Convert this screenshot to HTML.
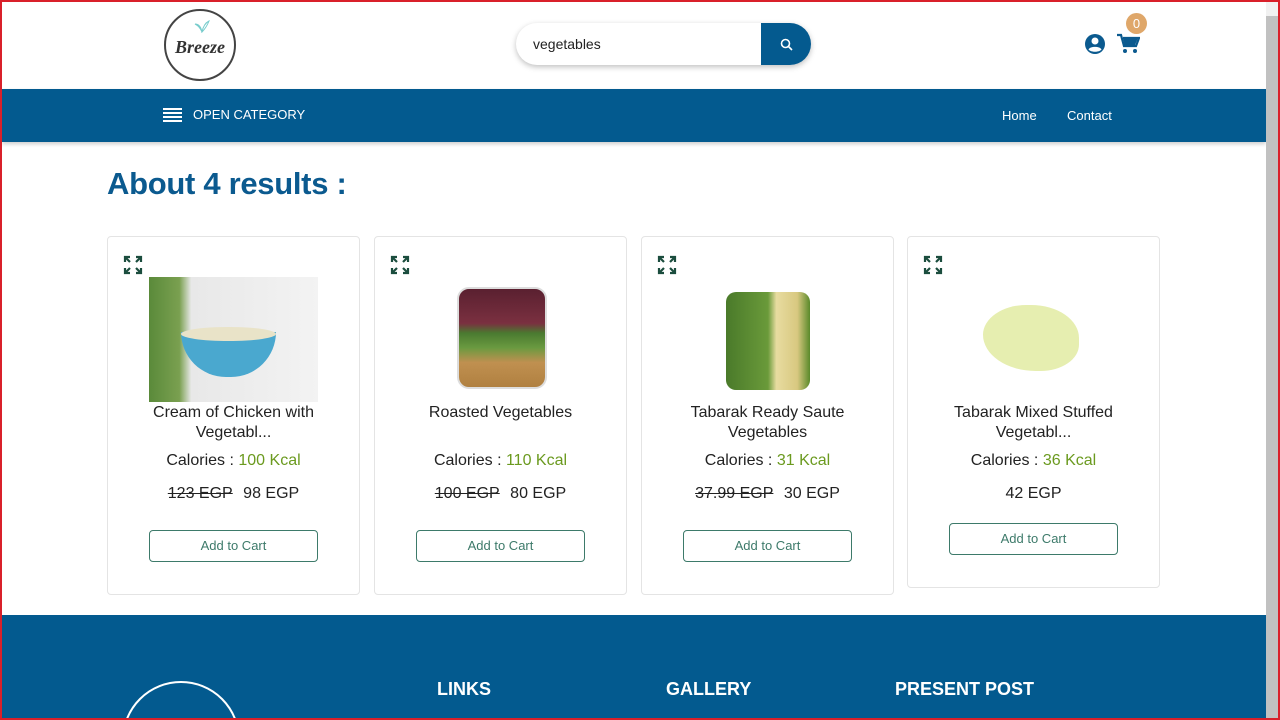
<!DOCTYPE html>
<html><head><meta charset="utf-8"><style>
*{box-sizing:border-box;margin:0;padding:0}
html,body{width:1280px;height:720px;overflow:hidden}
body{font-family:"Liberation Sans",sans-serif;background:#fff;position:relative}
.frame{position:absolute;inset:0;border:2px solid #d9202a;border-right:none;pointer-events:none;z-index:10}
.rb{position:absolute;right:0;top:0;width:2px;height:720px;background:#d9202a;z-index:11}
.sb{position:absolute;right:2px;top:2px;width:12px;height:716px;background:#c1c1c1;z-index:9}
.sbt{position:absolute;right:2px;top:2px;width:12px;height:14px;background:#f1f1f1;z-index:9}
.logo{position:absolute;left:164px;top:9px;width:72px;height:72px;border:2px solid #444;border-radius:50%;text-align:center}
.logo span{position:absolute;top:26px;left:0;right:0;font:italic bold 18px "Liberation Serif",serif;color:#333}
.search{position:absolute;left:516px;top:23px;width:295px;height:42px;border-radius:21px;box-shadow:0 2px 6px rgba(0,0,0,.25);background:#fff}
.search span{position:absolute;left:17px;top:13px;font-size:14px;color:#222}
.sbtn{position:absolute;right:0;top:0;width:50px;height:42px;background:#045a8f;border-radius:0 21px 21px 0}
.nav{position:absolute;left:2px;top:89px;width:1264px;height:53px;background:#035a8f;box-shadow:0 2px 4px rgba(0,0,0,.2)}
.nav .cat{position:absolute;left:191px;top:18px;color:#fff;font-size:13px}
.nav .hm{position:absolute;top:19px;color:#fff;font-size:13px}
h1{position:absolute;left:107px;top:166px;font-size:31px;color:#0b5a8f;font-weight:bold;letter-spacing:-0.3px}
.card{position:absolute;top:236px;width:253px;height:359px;border:1px solid #e4e4e4;border-radius:4px;text-align:center;color:#222}
.card .ex{position:absolute;left:15px;top:18px}
.card .img{position:absolute;left:41px;top:40px;width:169px;height:125px}
.card .t{position:absolute;left:0;right:0;top:166px;font-size:16px;line-height:20px}
.card .c{position:absolute;left:0;right:0;top:215px;font-size:16px}
.card .c b{font-weight:normal;color:#6b9a1f}
.card .p{position:absolute;left:0;right:0;top:248px;font-size:16px}
.card .p s{margin-right:6px}
.card .btn{position:absolute;left:41px;top:293px;width:169px;height:32px;border:1px solid #3d7a6a;border-radius:4px;color:#3d7a6a;font-size:13px;line-height:30px}
.foot{position:absolute;left:2px;top:615px;width:1264px;height:105px;background:#035a8f;overflow:hidden}
.foot h3{position:absolute;top:64px;color:#fff;font-size:18px}
</style></head><body>
<div class="logo"><span>Breeze</span><svg style="position:absolute;left:28px;top:8px" width="16" height="14"><path d="M8 13C6 8 3 6 1 5 5 5 7 8 8 13ZM8 13C9 8 11 4 15 2 13 7 11 10 8 13Z" fill="none" stroke="#7cc" stroke-width="1"/></svg></div>
<div class="search"><span>vegetables</span><div class="sbtn"><svg style="position:absolute;left:19px;top:15px" width="13" height="13"><circle cx="5.5" cy="5.5" r="4" stroke="#fff" stroke-width="1.6" fill="none"/><path d="M8.5 8.5L12 12" stroke="#fff" stroke-width="1.6"/></svg></div></div>
<svg style="position:absolute;left:1084px;top:33px" width="22" height="22" viewBox="0 0 22 22"><circle cx="11" cy="11" r="10" fill="#0b5a8f"/><circle cx="11" cy="8" r="3.5" fill="#fff"/><path d="M4.5 16.5C6 13 16 13 17.5 16.5 15 19.5 7 19.5 4.5 16.5Z" fill="#fff"/></svg>
<svg style="position:absolute;left:1116px;top:33px" width="24" height="22" viewBox="0 0 24 22"><path d="M1 2h4l3 11h12l3-8H7" fill="none" stroke="#0b5a8f" stroke-width="2.2"/><path d="M7 5h15l-3 7H8.5z" fill="#0b5a8f"/><circle cx="9" cy="18" r="2" fill="#0b5a8f"/><circle cx="19" cy="18" r="2" fill="#0b5a8f"/></svg>
<div style="position:absolute;left:1126px;top:13px;width:21px;height:21px;border-radius:50%;background:#dfa76a;color:#fff;font-size:13px;text-align:center;line-height:21px">0</div>
<div class="nav"><svg style="position:absolute;left:161px;top:18px" width="19" height="16"><path d="M0 2h19M0 6h19M0 10h19M0 14h19" stroke="#fff" stroke-width="2"/></svg><span class="cat">OPEN CATEGORY</span><span class="hm" style="left:1000px">Home</span><span class="hm" style="left:1065px">Contact</span></div>
<h1>About 4 results :</h1>

<div class="card" style="left:107px"><svg class="ex" width="20" height="20" viewBox="0 0 20 20" fill="none" stroke="#1b4d3e" stroke-width="2.2"><path d="M2 7V2h5M2 2l5 5M18 7V2h-5M18 2l-5 5M2 13v5h5M2 18l5-5M18 13v5h-5M18 18l-5-5"/></svg>
<div class="img" style="background:linear-gradient(90deg,#5a8a3a 0,#7aa050 18%,#e8e8e8 25%,#f3f3f3 100%)"><div style="position:absolute;left:32px;top:55px;width:95px;height:45px;border-radius:0 0 48px 48px;background:#4aa8cf"></div><div style="position:absolute;left:32px;top:50px;width:95px;height:14px;border-radius:50%;background:#e9e3c8"></div></div>
<div class="t">Cream of Chicken with<br>Vegetabl...</div><div class="c">Calories : <b>100 Kcal</b></div><div class="p"><s>123 EGP</s> 98 EGP</div><div class="btn">Add to Cart</div></div>

<div class="card" style="left:374px"><svg class="ex" width="20" height="20" viewBox="0 0 20 20" fill="none" stroke="#1b4d3e" stroke-width="2.2"><path d="M2 7V2h5M2 2l5 5M18 7V2h-5M18 2l-5 5M2 13v5h5M2 18l5-5M18 13v5h-5M18 18l-5-5"/></svg>
<div style="position:absolute;left:82px;top:50px;width:90px;height:102px;border-radius:12px;border:2px solid #ddd;background:linear-gradient(#5a2030 0,#7a3040 35%,#4a7a30 45%,#6a9a40 60%,#c09050 75%,#b08040 100%)"></div>
<div class="t">Roasted Vegetables</div><div class="c">Calories : <b>110 Kcal</b></div><div class="p"><s>100 EGP</s> 80 EGP</div><div class="btn">Add to Cart</div></div>

<div class="card" style="left:641px"><svg class="ex" width="20" height="20" viewBox="0 0 20 20" fill="none" stroke="#1b4d3e" stroke-width="2.2"><path d="M2 7V2h5M2 2l5 5M18 7V2h-5M18 2l-5 5M2 13v5h5M2 18l5-5M18 13v5h-5M18 18l-5-5"/></svg>
<div style="position:absolute;left:84px;top:55px;width:84px;height:98px;border-radius:10px;background:linear-gradient(90deg,#4a7a2a,#6a9a3a 50%,#e8dca0 60%,#d8c880 85%,#5a8a2a)"></div>
<div class="t">Tabarak Ready Saute<br>Vegetables</div><div class="c">Calories : <b>31 Kcal</b></div><div class="p"><s>37.99 EGP</s> 30 EGP</div><div class="btn">Add to Cart</div></div>

<div class="card" style="left:907px;height:352px"><svg class="ex" width="20" height="20" viewBox="0 0 20 20" fill="none" stroke="#1b4d3e" stroke-width="2.2"><path d="M2 7V2h5M2 2l5 5M18 7V2h-5M18 2l-5 5M2 13v5h5M2 18l5-5M18 13v5h-5M18 18l-5-5"/></svg>
<div style="position:absolute;left:75px;top:68px;width:96px;height:66px;border-radius:45% 50% 40% 55%;background:#e6eeb0"></div>
<div class="t">Tabarak Mixed Stuffed<br>Vegetabl...</div><div class="c">Calories : <b>36 Kcal</b></div><div class="p">42 EGP</div><div class="btn" style="top:286px">Add to Cart</div></div>

<div class="foot"><div style="position:absolute;left:120px;top:66px;width:118px;height:118px;border:2px solid #fff;border-radius:50%"></div><h3 style="left:435px">LINKS</h3><h3 style="left:664px">GALLERY</h3><h3 style="left:893px">PRESENT POST</h3></div>
<div class="sb"></div><div class="sbt"></div>
<div class="frame"></div><div class="rb"></div>
</body></html>
